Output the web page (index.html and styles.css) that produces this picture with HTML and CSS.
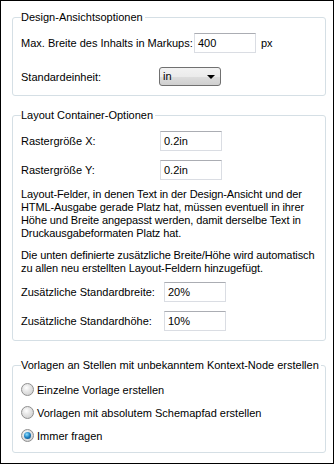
FILE: index.html
```html
<!DOCTYPE html>
<html lang="de">
<head>
<meta charset="utf-8">
<link rel="stylesheet" href="styles.css">
</head>
<body>
<div class="frame">
  <fieldset class="group g1">
    <legend>Design-Ansichtsoptionen</legend>
    <div class="row r1">
      <span class="label lw-a">Max. Breite des Inhalts in Markups:</span>
      <span class="input">400</span>
      <span class="unit">px</span>
    </div>
    <div class="row r2">
      <span class="label lw-b">Standardeinheit:</span>
      <span class="select">in<span class="arrow"></span></span>
    </div>
  </fieldset>

  <fieldset class="group g2">
    <legend>Layout Container-Optionen</legend>
    <div class="row r3">
      <span class="label lw-c">Rastergröße X:</span>
      <span class="input">0.2in</span>
    </div>
    <div class="row r4">
      <span class="label lw-c">Rastergröße Y:</span>
      <span class="input">0.2in</span>
    </div>
    <p class="para p1">Layout-Felder, in denen Text in der Design-Ansicht und der<br>HTML-Ausgabe gerade Platz hat, müssen eventuell in ihrer<br>Höhe und Breite angepasst werden, damit derselbe Text in<br>Druckausgabeformaten Platz hat.</p>
    <p class="para p2">Die unten definierte zusätzliche Breite/Höhe wird automatisch<br>zu allen neu erstellten Layout-Feldern hinzugefügt.</p>
    <div class="row r5">
      <span class="label lw-d">Zusätzliche Standardbreite:</span>
      <span class="input">20%</span>
    </div>
    <div class="row r6">
      <span class="label lw-d">Zusätzliche Standardhöhe:</span>
      <span class="input">10%</span>
    </div>
  </fieldset>

  <fieldset class="group g3">
    <legend>Vorlagen an Stellen mit unbekanntem Kontext-Node erstellen</legend>
    <div class="radio-row"><span class="radio"></span><span>Einzelne Vorlage erstellen</span></div>
    <div class="radio-row"><span class="radio"></span><span>Vorlagen mit absolutem Schemapfad erstellen</span></div>
    <div class="radio-row"><span class="radio checked"></span><span>Immer fragen</span></div>
  </fieldset>
</div>
</body>
</html>
```
FILE: styles.css
```css
html, body {
  margin: 0;
  padding: 0;
  background: #ffffff;
}
body {
  font-family: "Liberation Sans", Arial, sans-serif;
  font-size: 11px;
  color: #000;
}
.frame {
  box-sizing: border-box;
  width: 334px;
  height: 464px;
  border: 1px solid #000;
  background: #fff;
  padding: 10px 0 0 11px;
  display: flex;
  flex-direction: column;
}
.group {
  box-sizing: border-box;
  width: 314px;
  margin: 0;
  padding: 0 8px 0 8px;
  border: 1px solid #d5dfe5;
  border-radius: 3px;
  min-width: 0;
}
.group legend {
  padding: 0 2px 0 0;
  margin-left: 0;
  line-height: 13px;
  height: 13px;
  white-space: nowrap;
}
.g1 { height: 85px; }
.g2 { height: 232px; margin-top: 13px; }
.g3 { height: 94px; margin-top: 18px; }

.row {
  display: flex;
  align-items: center;
  white-space: nowrap;
}
.label { flex: none; }
.lw-a { width: 173px; }
.lw-b { width: 138px; }
.lw-c { width: 139px; }
.lw-d { width: 143px; }

.input {
  box-sizing: border-box;
  width: 62px;
  height: 20px;
  border: 1px solid #dadde3;
  border-top-color: #abadb3;
  padding: 0 3px;
  line-height: 18px;
  background: #fff;
}
.unit { margin-left: 5px; }

.r1 { margin-top: 9px; }
.r2 { margin-top: 14px; }
.select {
  box-sizing: border-box;
  position: relative;
  width: 62px;
  height: 19px;
  border: 1px solid #707070;
  border-radius: 3px;
  padding: 0 3px;
  line-height: 17px;
  background: linear-gradient(#f2f2f2 0%, #ebebeb 50%, #dddddd 51%, #cfcfcf 100%);
}
.arrow {
  position: absolute;
  right: 5px;
  top: 7px;
  width: 0;
  height: 0;
  border-left: 4px solid transparent;
  border-right: 4px solid transparent;
  border-top: 4px solid #000;
}

.r3 { margin-top: 9px; }
.r4 { margin-top: 9px; }
.para {
  margin: 0;
  line-height: 13px;
  white-space: nowrap;
  letter-spacing: -0.1px;
}
.p1 { margin-top: 8px; }
.p2 { margin-top: 9px; }
.r5 { margin-top: 7px; }
.r6 { margin-top: 9px; }

.radio-row {
  display: flex;
  align-items: center;
  gap: 3px;
  height: 23px;
}
.radio-row:first-of-type { margin-top: 6px; }
.radio {
  box-sizing: border-box;
  flex: none;
  width: 13px;
  height: 13px;
  border-radius: 50%;
  border: 1px solid #8f8f8f;
  background: radial-gradient(circle at 40% 35%, #ffffff 0%, #e8e8e8 35%, #c8c8c8 100%);
  position: relative;
}
.radio.checked::after {
  content: "";
  position: absolute;
  left: 2px;
  top: 2px;
  width: 7px;
  height: 7px;
  border-radius: 50%;
  background: radial-gradient(circle at 40% 35%, #8fe0ff 0%, #1d7fc0 50%, #0a3e6e 100%);
}
```
